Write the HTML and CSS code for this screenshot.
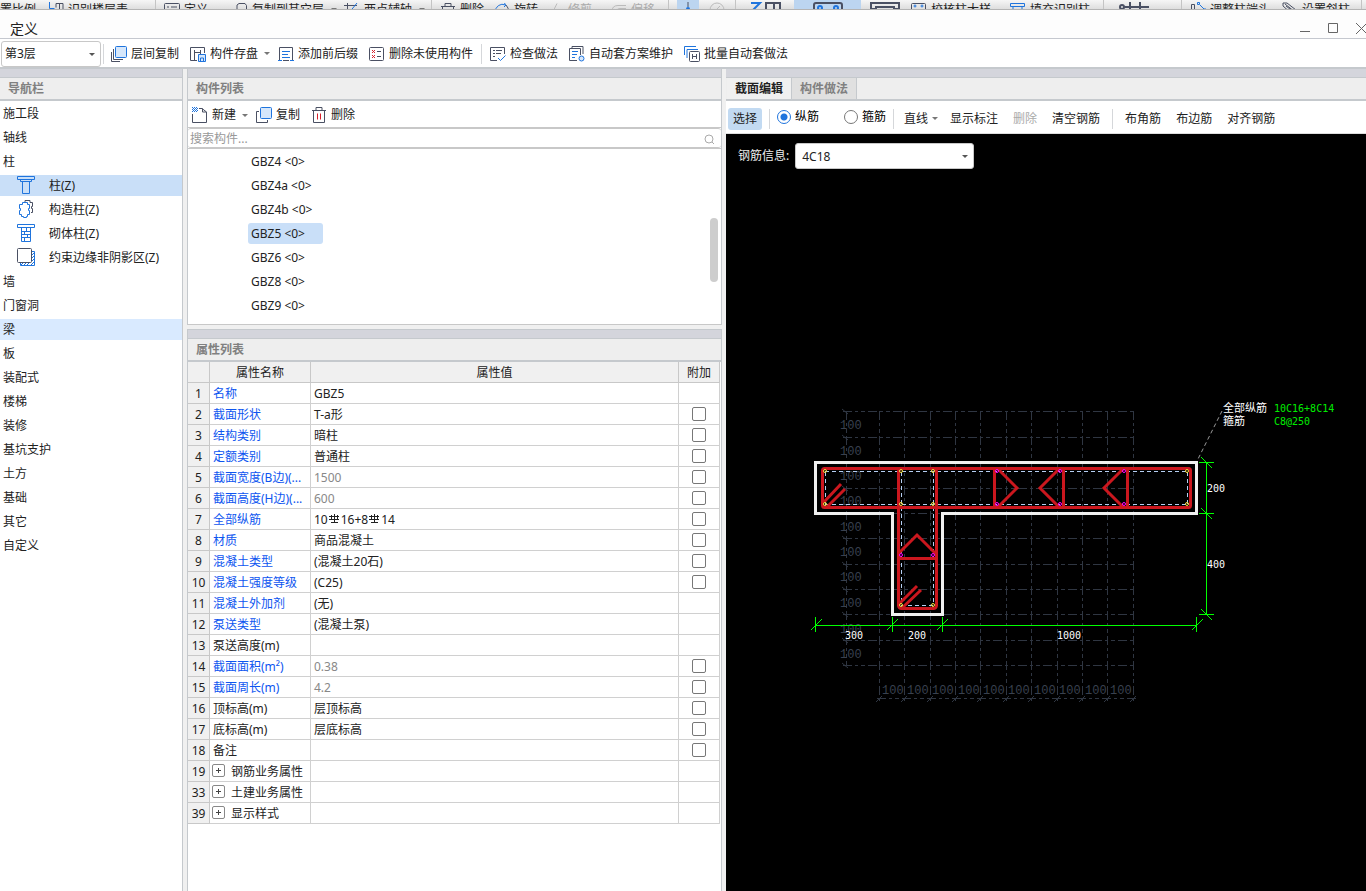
FILE: index.html
```html
<!DOCTYPE html>
<html lang="zh-CN">
<head>
    <meta charset="UTF-8">
    <meta name="viewport" content="width=device-width, initial-scale=1.0">
    <title>定义</title>
    <link rel="stylesheet" href="styles.css">
</head>
<body>

    <!-- Ribbon of the main window, mostly hidden behind the dialog -->
    <div class="ribbon">
        <div class="tool">置比例</div>
        <div class="tool"><svg class="icon" viewBox="0 0 16 16"><path class="b" d="M1.500 0v6.500h5"/><path d="M6.500 15V9.500H15V1.500H8v4M11.500 1.500v8"/></svg>识别楼层表</div>
        <div class="tool line"><svg class="icon" viewBox="0 0 16 16"><rect x=".5" y="1.500" width="15" height="13" rx="1"/><path d="M3 5h2M7 5h6M3 8h2M7 8h6"/></svg>定义</div>
        <div class="tool"><svg class="icon" viewBox="0 0 16 16"><path class="b" d="M0 7.500h5v6H.5z"/><path d="M5 10V3l2-1.500h6l1.500 2V12H8"/></svg>复制到其它层<i class="caret"></i></div>
        <div class="tool"><svg class="icon" viewBox="0 0 16 16"><path d="M0 3.500h13M3.500 1v13"/><path class="b" d="M13 1 4 12"/></svg>两点辅轴<i class="caret"></i></div>
        <div class="tool line"><svg class="icon" viewBox="0 0 16 16"><path d="M1 4.500h14M5 4V1.500h6V4M2.500 5v10h11V5"/><path class="r" d="M6.500 7v6M9.500 7v6"/></svg>删除</div>
        <div class="tool"><svg class="icon" viewBox="0 0 16 16"><path class="b" d="M1.500 10a7 7 0 0 1 10-7l-1-2M12 3l-2 2"/><path d="M12 3a7 7 0 0 1 2 7"/></svg>旋转</div>
        <div class="tool off"><svg class="icon" viewBox="0 0 16 16"><path d="M0 7.500h6l3-6M9 7.500h6"/></svg>修剪</div>
        <div class="tool off"><svg class="icon" viewBox="0 0 16 16"><path d="M15 3.500H7q-6 0-6 6M15 6.500H9q-4 0-4 5"/></svg>偏移</div>
        <div class="tool line"><span class="lit"><svg class="icon" viewBox="0 0 16 16"><path d="M8 0v5M0 7.500h5M11 7.500h5"/><circle class="bf" cx="8" cy="7" r="2"/></svg></span></div>
        <div class="tool off"><svg class="icon" viewBox="0 0 16 16"><circle cx="8" cy="8" r="7"/><path d="m6 9 5-5"/></svg></div>
        <div class="tool line big"><svg class="wide" viewBox="0 0 30 16"><path class="b" d="M0 1h9L2 8"/><path d="M15 16V1h8v6M23 1h6v15"/></svg></div>
        <div class="tool active"><svg class="wide" viewBox="0 0 30 16"><rect x="1" y="1" width="28" height="17" rx="2"/><circle class="b" cx="7" cy="6" r="2"/><circle class="b" cx="23" cy="6" r="2"/></svg></div>
        <div class="tool big"><svg class="wide" viewBox="0 0 30 16"><path d="M1 1h28v6h-5V5H6v2H1z"/></svg></div>
        <div class="tool"><svg class="icon" viewBox="0 0 16 16"><rect x=".5" y="1.500" width="14" height="13" rx="1"/><circle class="b" cx="4" cy="4" r="1"/><circle class="b" cx="11" cy="4" r="1"/></svg>校核柱大样</div>
        <div class="tool"><svg class="icon" viewBox="0 0 16 16"><path class="b" d="M.5 1.500h14v3H.5zM3 4.500v3h9v-3"/></svg>填充识别柱</div>
        <div class="tool line big"><svg class="wide" viewBox="0 0 30 16"><circle cx="3" cy="5" r="2"/><path d="M5 5h25M11 0v8M21 0v8"/></svg></div>
        <div class="tool line"><svg class="icon" viewBox="0 0 16 16"><path d="M1.500 15V2.500h3V15"/><path class="b" d="M7.500.500h2v2h-2zM10 3l4 4h3"/></svg>调整柱端头</div>
        <div class="tool"><svg class="icon" viewBox="0 0 16 16"><path d="M1 1h4l9 7M1 1v3l9 8M4 4l9 7M3 2l10 8"/></svg>设置斜柱</div>
        <div class="tool line"></div>
    </div>

    <!-- Title Bar -->
    <header class="titlebar">
        <h1>定义</h1>
        <div class="window-buttons">
            <button aria-label="最小化"><svg viewBox="0 0 11 11"><path d="M0 8.500h10"/></svg></button>
            <button aria-label="最大化"><svg viewBox="0 0 11 11"><path d="M.5.500h9v9h-9z"/></svg></button>
            <button aria-label="关闭"><svg viewBox="0 0 11 11"><path d="m0 0 11 11M11 0 0 11"/></svg></button>
        </div>
    </header>

    <!-- Main Toolbar -->
    <div class="toolbar main-toolbar">
        <div class="select floor"><select aria-label="楼层"><option>第3层</option></select></div>
        <i class="sep first"></i>
        <button><svg class="icon" viewBox="0 0 16 16"><rect class="b fill" x="4.500" y=".5" width="11" height="11" rx="1"/><path d="M2.500 3v10.500H12M.5 6v9.500H9"/></svg>层间复制</button>
        <button><svg class="icon" viewBox="0 0 16 16"><path d="M7 14.500H.5v-13h14V7M4.500 4v10M4.500 6.500h6V4M10.500 6v3"/><path class="b fill" d="M8.500 8.500h7v7h-7z"/><path class="b" d="M10.500 15v-3h3v3"/></svg>构件存盘<i class="caret"></i></button>
        <button><svg class="icon" viewBox="0 0 16 16"><path d="M3 14.500H1.500v-13h13v13H13M5 14.500h6"/><path class="b" d="M4 5.500h8M4 8.500h6M4 11.500h8M0 14.500h4M12 14.500h4"/></svg>添加前后缀</button>
        <button><svg class="icon" viewBox="0 0 16 16"><rect x=".5" y="1.500" width="14" height="13" rx="1"/><path class="r" d="m3 4 3 3M6 4 3 7M3 9l3 3M6 9l-3 3"/><path d="M8 5.500h4M8 10.500h4"/></svg>删除未使用构件</button>
        <i class="sep"></i>
        <button><svg class="icon" viewBox="0 0 16 16"><path d="M7 14.500H.5v-13h14V8M3 4.500h2M6 4.500h6M3 7.500h2M6 7.500h5M3 10.500h2"/><path class="b" d="m8 12 2.500 2.500 5-5"/></svg>检查做法</button>
        <button><svg class="icon" viewBox="0 0 16 16"><path d="M3 2V.5h11V8M8 14.500H.5v-12h11V9"/><path class="b" d="M3 5.500h6M3 8.500h5M3 11.500h3"/><circle class="b fill" cx="12.500" cy="12.500" r="2.500"/></svg>自动套方案维护</button>
        <button><svg class="icon" viewBox="0 0 16 16"><path class="b" d="M.5 9V.5H12M3 12V3.500h11"/><rect x="5.500" y="5.500" width="10" height="10" rx="1"/><path d="M8.500 8v5M12.500 8v5M8.500 10.500h4"/></svg>批量自动套做法</button>
    </div>

    <main class="workspace">

        <!-- Navigation -->
        <nav class="panel nav">
            <div class="strip"></div>
            <h2>导航栏</h2>
            <ul>
                <li>施工段</li>
                <li>轴线</li>
                <li>柱</li>
                <li class="child selected"><svg viewBox="0 0 20 20"><path d="M1.500 1.500h17v3h-17zM4.500 4.500v2h11v-2M6.500 6.500v12h7v-12"/></svg>柱(Z)</li>
                <li class="child"><svg viewBox="0 0 20 20"><path d="M6.500 3.500h5v2h2v4h-1v2h1v4h-2v2h-1v1h-3v-1h-2v-2h-2v-4h1v-2h-1v-4h3z"/><path class="back" d="M9 3V1.500h5v2h2.500v4h-1v2h1v4H15"/></svg>构造柱(Z)</li>
                <li class="child"><svg viewBox="0 0 20 20"><path d="M1.500 1.500h17v3h-17zM5.500 4.500v14h9v-14M5 8.500h9M5 11.500h9M5 14.500h9M10.500 5v3M8.500 9v3M11.500 12v3M8.500 15v3"/></svg>砌体柱(Z)</li>
                <li class="child"><svg viewBox="0 0 20 20"><path d="M16 4.500h2.500v14h-14V16M16 8l2-2M16 11l2-2M16 14l2-2M15 18l3-3M11 18l2-2M8 18l2-2M5 18l2-2"/><rect class="front" x="1.500" y="1.500" width="14" height="14" rx="1"/></svg>约束边缘非阴影区(Z)</li>
                <li>墙</li>
                <li>门窗洞</li>
                <li class="hover">梁</li>
                <li>板</li>
                <li>装配式</li>
                <li>楼梯</li>
                <li>装修</li>
                <li>基坑支护</li>
                <li>土方</li>
                <li>基础</li>
                <li>其它</li>
                <li>自定义</li>
            </ul>
        </nav>

        <div class="middle">
            <!-- Component List -->
            <section class="panel components">
                <div class="strip"></div>
                <h2>构件列表</h2>
                <div class="toolbar">
                    <button><svg class="icon" viewBox="0 0 16 16"><path d="M.5 7v8.500h14V5L10 1.500H7M10.500 1.500V5h4"/><path class="b dots" d="M0 .5h5M1 1.500h5M0 2.500h5M1 3.500h5M0 4.500h5"/></svg>新建<i class="caret"></i></button>
                    <button><svg class="icon" viewBox="0 0 16 16"><path d="M3 4.500H.5v11h11V13"/><rect class="b fill" x="4.500" y=".5" width="11" height="11" rx="1"/></svg>复制</button>
                    <button><svg class="icon" viewBox="0 0 16 16"><path d="M1 3.500h14M5 3V.5h6V3M2.500 4v11.500h11V4"/><path class="r" d="M6.500 6.500v6M9.500 6.500v6"/></svg>删除</button>
                </div>
                <div class="search">
                    <input type="text" placeholder="搜索构件..." aria-label="搜索构件">
                    <svg viewBox="0 0 12 12"><circle cx="6" cy="6" r="4"/><path d="m9 9 2 2"/></svg>
                </div>
                <div class="list">
                    <ul>
                        <li>GBZ4 &lt;0&gt;</li>
                        <li>GBZ4a &lt;0&gt;</li>
                        <li>GBZ4b &lt;0&gt;</li>
                        <li class="selected">GBZ5 &lt;0&gt;</li>
                        <li>GBZ6 &lt;0&gt;</li>
                        <li>GBZ8 &lt;0&gt;</li>
                        <li>GBZ9 &lt;0&gt;</li>
                    </ul>
                    <div class="thumb"></div>
                </div>
            </section>

            <!-- Property List -->
            <section class="panel properties">
                <div class="strip"></div>
                <h2>属性列表</h2>
                <table>
                    <thead>
                        <tr><th class="num"></th><th class="name">属性名称</th><th>属性值</th><th class="add">附加</th></tr>
                    </thead>
                    <tbody>
                        <tr><th>1</th><td class="key">名称</td><td>GBZ5</td><td></td></tr>
                        <tr><th>2</th><td class="key">截面形状</td><td>T-a形</td><td><input type="checkbox" aria-label="附加 截面形状"></td></tr>
                        <tr><th>3</th><td class="key">结构类别</td><td>暗柱</td><td><input type="checkbox" aria-label="附加 结构类别"></td></tr>
                        <tr><th>4</th><td class="key">定额类别</td><td>普通柱</td><td><input type="checkbox" aria-label="附加 定额类别"></td></tr>
                        <tr><th>5</th><td class="key">截面宽度(B边)(...</td><td class="calc">1500</td><td><input type="checkbox" aria-label="附加 截面宽度"></td></tr>
                        <tr><th>6</th><td class="key">截面高度(H边)(...</td><td class="calc">600</td><td><input type="checkbox" aria-label="附加 截面高度"></td></tr>
                        <tr><th>7</th><td class="key">全部纵筋</td><td>10<svg class="rebar" viewBox="0 0 11 10"><path d="M0 2.500h10M0 5.500h10M2.500 1v5M5.500 0v9M8.500 1v5M2 8.500h7"/></svg>16+8<svg class="rebar" viewBox="0 0 11 10"><path d="M0 2.500h10M0 5.500h10M2.500 1v5M5.500 0v9M8.500 1v5M2 8.500h7"/></svg>14</td><td><input type="checkbox" aria-label="附加 全部纵筋"></td></tr>
                        <tr><th>8</th><td class="key">材质</td><td>商品混凝土</td><td><input type="checkbox" aria-label="附加 材质"></td></tr>
                        <tr><th>9</th><td class="key">混凝土类型</td><td>(混凝土20石)</td><td><input type="checkbox" aria-label="附加 混凝土类型"></td></tr>
                        <tr><th>10</th><td class="key">混凝土强度等级</td><td>(C25)</td><td><input type="checkbox" aria-label="附加 混凝土强度等级"></td></tr>
                        <tr><th>11</th><td class="key">混凝土外加剂</td><td>(无)</td><td></td></tr>
                        <tr><th>12</th><td class="key">泵送类型</td><td>(混凝土泵)</td><td></td></tr>
                        <tr><th>13</th><td>泵送高度(m)</td><td></td><td></td></tr>
                        <tr><th>14</th><td class="key">截面面积(m²)</td><td class="calc">0.38</td><td><input type="checkbox" aria-label="附加 截面面积"></td></tr>
                        <tr><th>15</th><td class="key">截面周长(m)</td><td class="calc">4.2</td><td><input type="checkbox" aria-label="附加 截面周长"></td></tr>
                        <tr><th>16</th><td>顶标高(m)</td><td>层顶标高</td><td><input type="checkbox" aria-label="附加 顶标高"></td></tr>
                        <tr><th>17</th><td>底标高(m)</td><td>层底标高</td><td><input type="checkbox" aria-label="附加 底标高"></td></tr>
                        <tr><th>18</th><td>备注</td><td></td><td><input type="checkbox" aria-label="附加 备注"></td></tr>
                        <tr><th>19</th><td><button class="expand" aria-label="展开"></button>钢筋业务属性</td><td></td><td></td></tr>
                        <tr><th>33</th><td><button class="expand" aria-label="展开"></button>土建业务属性</td><td></td><td></td></tr>
                        <tr><th>39</th><td><button class="expand" aria-label="展开"></button>显示样式</td><td></td><td></td></tr>
                    </tbody>
                </table>
            </section>
        </div>

        <!-- Section Editor -->
        <section class="editor">
            <div class="strip"></div>
            <div class="tabs">
                <button class="current">截面编辑</button>
                <button>构件做法</button>
            </div>
            <div class="edit-tools">
                <button class="pick">选择</button>
                <i class="sep"></i>
                <label><input type="radio" name="bar" checked>纵筋</label>
                <label class="hoop"><input type="radio" name="bar">箍筋</label>
                <i class="sep"></i>
                <button class="shape">直线<i class="caret"></i></button>
                <button>显示标注</button>
                <button disabled>删除</button>
                <button>清空钢筋</button>
                <i class="sep wide-sep"></i>
                <button>布角筋</button>
                <button>布边筋</button>
                <button>对齐钢筋</button>
            </div>
            <div class="canvas">
                <div class="bar-info">
                    <label for="bar-info">钢筋信息:</label>
                    <div class="select"><select id="bar-info"><option>4C18</option></select></div>
                </div>
                <svg class="drawing" viewBox="726 134 640 757">
                    <!-- 100mm grid -->
                    <g class="grid">
                        <path d="M843 411.500h290M843 437.500h290M843 462.500h290M843 488.500h290M843 513.500h290M843 538.500h290M843 564.500h290M843 589.500h290M843 614.500h290M843 640.500h290M843 665.500h290M877 698.500h259"/>
                        <path d="M846.500 411v255M879.500 411v291M904.500 411v291M930.500 411v291M955.500 411v291M980.500 411v291M1006.500 411v291M1031.500 411v291M1057.500 411v291M1082.500 411v291M1107.500 411v291M1133.500 411v291"/>
                        <path class="ticks" d="m842 409 6 5M842 435l6 5M842 486l6 5M842 536l6 5M842 562l6 5M842 587l6 5M842 612l6 5M842 638l6 5M842 663l6 5M876 702l6-6M901 702l6-6M927 702l6-6M952 702l6-6M977 702l6-6M1003 702l6-6M1028 702l6-6M1054 702l6-6M1079 702l6-6M1104 702l6-6M1130 702l6-6"/>
                    </g>
                    <g class="grid-text">
                        <text x="840" y="429">100</text>
                        <text x="840" y="455">100</text>
                        <text x="840" y="480">100</text>
                        <text x="840" y="505">100</text>
                        <text x="840" y="531">100</text>
                        <text x="840" y="556">100</text>
                        <text x="840" y="581">100</text>
                        <text x="840" y="607">100</text>
                        <text x="840" y="633">100</text>
                        <text x="840" y="658">100</text>
                        <text x="882" y="694">100</text>
                        <text x="907" y="694">100</text>
                        <text x="932" y="694">100</text>
                        <text x="958" y="694">100</text>
                        <text x="983" y="694">100</text>
                        <text x="1008" y="694">100</text>
                        <text x="1034" y="694">100</text>
                        <text x="1059" y="694">100</text>
                        <text x="1085" y="694">100</text>
                        <text x="1110" y="694">100</text>
                    </g>

                    <!-- Concrete outline -->
                    <path class="outline" d="M815.500 462.500h381v51h-254v101h-50v-101h-77z"/>

                    <!-- Cover lines -->
                    <path class="cover" d="M825 471.500h362M825 504.500h362M825.500 472v33M1187.500 472v33M901.500 472v133M933.500 472v133M901 605.500h33"/>

                    <!-- Stirrups and ties -->
                    <g class="stirrup">
                        <rect x="822.500" y="468.500" width="368" height="39" rx="2"/>
                        <rect x="898.500" y="468.500" width="38" height="140" rx="3"/>
                        <path d="m824 502 17-18M827 507l18-18M898 605l19-19M902 608l19-18"/>
                        <path d="m898 554 19-19 19 19M898 558.500h38"/>
                        <path d="M994.500 468v39M997 468l20 20-19 19"/>
                        <path d="M1063.500 468v39M1060 468l-20 20 19 19"/>
                        <path d="M1127.500 468v39M1124 468l-20 20 19 19"/>
                    </g>
                    <g class="corner-bar">
                        <circle cx="825" cy="471" r="1.500"/><circle cx="825" cy="504" r="1.500"/>
                        <circle cx="901" cy="471" r="1.500"/><circle cx="933" cy="471" r="1.500"/>
                        <circle cx="901" cy="504" r="1.500"/><circle cx="933" cy="504" r="1.500"/>
                        <circle cx="1187" cy="471" r="1.500"/><circle cx="1187" cy="504" r="1.500"/>
                        <circle cx="901" cy="605" r="1.500"/><circle cx="933" cy="605" r="1.500"/>
                    </g>
                    <g class="side-bar">
                        <circle cx="997" cy="471" r="1.500"/><circle cx="997" cy="504" r="1.500"/>
                        <circle cx="1060" cy="471" r="1.500"/><circle cx="1060" cy="504" r="1.500"/>
                        <circle cx="1124" cy="471" r="1.500"/><circle cx="1124" cy="504" r="1.500"/>
                        <circle cx="901" cy="555" r="1.500"/><circle cx="933" cy="555" r="1.500"/>
                    </g>

                    <!-- Dimensions -->
                    <path class="dim" d="M815 625.500h382M815.500 617v15M892.500 617v15M942.500 617v15M1196.500 617v15M1206.500 462v153M1199 462.500h15M1199 513.500h15M1199 614.500h15"/>
                    <path class="dim" d="m811 630 11-11M887 630l11-11M937 630l11-11M1192 630l11-11M1201 457l11 11M1201 508l11 11M1201 609l11 11"/>
                    <g class="dim-text">
                        <text x="845" y="639">300</text>
                        <text x="908" y="639">200</text>
                        <text x="1057" y="639">1000</text>
                        <text x="1207" y="492">200</text>
                        <text x="1207" y="568">400</text>
                        <text class="cn" x="1223" y="412">全部纵筋</text>
                        <text class="cn" x="1223" y="425">箍筋</text>
                        <text class="spec" x="1274" y="412">10C16+8C14</text>
                        <text class="spec" x="1274" y="425">C8@250</text>
                    </g>
                    <path class="leader" d="m1222 411-25 50"/>
                </svg>
            </div>
        </section>
    </main>

</body>
</html>
```
FILE: styles.css
```css
* {
    box-sizing: border-box;
}
body {
    margin: 0;
    height: 100vh;
    display: flex;
    flex-direction: column;
    overflow: hidden;
    background: #f0f0f0;
    color: #222;
    font-family: "Noto Sans", "Noto Sans CJK SC", sans-serif;
    font-size: 12px;
    line-height: 22px;
}
h1, h2, ul {
    margin: 0;
    padding: 0;
    font-size: 12px;
    list-style: none;
}
button, select, input {
    font: inherit;
    color: inherit;
    margin: 0;
}
button {
    display: flex;
    align-items: center;
    padding: 0;
    border: 0;
    background: none;
    white-space: nowrap;
}
svg {
    display: block;
    fill: none;
    stroke: #4a5063;
}
.icon {
    width: 16px;
    height: 16px;
    margin-right: 4px;
    flex: none;
}
.b {
    stroke: #1f74dd;
}
.r {
    stroke: #d8202b;
}
.bf {
    fill: #1f74dd;
    stroke: none;
}
.fill {
    fill: #d6e7fb;
}
.dots {
    stroke-dasharray: 1 1;
}
.caret {
    width: 6px;
    border: 3px solid transparent;
    border-top-color: #777;
    border-bottom: 0;
}
.sep {
    width: 1px;
    height: 20px;
    background: #d5d7da;
}

/* ribbon */
.ribbon {
    flex: none;
    height: 10px;
    overflow: hidden;
    display: grid;
    grid-template-columns: 48px 107px 77px 112px 87px 63px 54px 63px 57px 41px 26px 59px 67px 50px 99px 93px 78px 101px 79px 1fr;
    background: linear-gradient(#f6f6f6, #dedede);
    border-bottom: 1px solid #b4b4b4;
}
.tool {
    display: flex;
    align-items: center;
    height: 19px;
    white-space: nowrap;
}
.tool.line {
    border-left: 1px solid #c4c4c4;
    padding-left: 8px;
}
.tool .caret {
    margin-left: 7px;
}
.tool.off {
    color: #aaa;
}
.tool.off svg {
    stroke: #bbb;
}
.tool.active {
    background: #bcd5f0;
    justify-content: center;
}
.tool.big {
    padding-left: 15px;
}
.tool:not(.line).big {
    padding-left: 9px;
}
.wide {
    width: 30px;
    height: 16px;
    stroke-width: 2;
}
.lit {
    flex: none;
    padding: 2px 3px;
    background: #bcd5f0;
}
.lit .icon {
    margin: 0;
}

/* title bar */
.titlebar {
    flex: none;
    display: flex;
    justify-content: space-between;
    height: 29px;
    padding: 8px 0 0 10px;
    background: #fdfdfd;
    border-bottom: 1px solid #c5c8cf;
}
.titlebar h1 {
    font-size: 14px;
    font-weight: normal;
}
.window-buttons {
    display: flex;
    gap: 17px;
    height: 20px;
    margin-right: -1px;
}
.window-buttons svg {
    width: 11px;
    height: 11px;
    stroke: #666;
}

/* toolbars */
.toolbar {
    display: flex;
    align-items: center;
    gap: 11px;
    background: #fff;
}
.toolbar .caret {
    margin-left: 6px;
    margin-right: -3px;
}
.main-toolbar {
    flex: none;
    height: 30px;
    padding: 1px 0 0 1px;
    border-bottom: 2px solid #c5c9cd;
}
.main-toolbar .sep {
    margin: 0 -3px;
}
.main-toolbar .sep.first {
    margin: 0 -4px 0 -9px;
}
.select {
    position: relative;
}
.select::after {
    content: "";
    position: absolute;
    right: 6px;
    top: 12px;
    border: 3px solid transparent;
    border-top-color: #555;
    border-bottom: 0;
    pointer-events: none;
}
.select select {
    appearance: none;
    display: block;
    width: 100%;
    height: 26px;
    padding: 1px 16px 0 6px;
    border: 1px solid #c8c8c8;
    border-radius: 3px;
    background: #fff;
}
.floor {
    width: 100px;
}
.floor select {
    padding-left: 3px;
}

/* panels */
.workspace {
    flex: 1;
    min-height: 0;
    display: grid;
    grid-template-columns: 183px 535px 1fr;
    column-gap: 4px;
}
.panel {
    background: #fff;
    border-right: 1px solid #c5c9cd;
}
.strip {
    height: 9px;
    background: #d4d5dc;
    border-bottom: 1px solid #c5c9cd;
}
.panel h2 {
    height: 23px;
    padding-left: 8px;
    background: #eee;
    border-bottom: 2px solid #c5c9cd;
    color: #808080;
}
.nav ul {
    display: flex;
    flex-direction: column;
    gap: 3px;
    padding-top: 2px;
}
.nav li {
    height: 21px;
    padding-left: 3px;
}
.nav .child {
    display: flex;
    padding-left: 16px;
}
.nav .child svg {
    width: 20px;
    height: 20px;
    margin-right: 13px;
    stroke: #1f74dd;
}
.nav .back, .nav .front {
    stroke: #4a5063;
}
.nav .front {
    fill: #fff;
}
.selected {
    background: #c9dff8;
}
.hover {
    background: #d9eaff;
}

/* component list */
.middle {
    display: flex;
    flex-direction: column;
    gap: 4px;
    min-height: 0;
}
.middle .panel {
    border-left: 1px solid #c5c9cd;
}
.components .toolbar {
    height: 27px;
    padding: 2px 0 0 4px;
    border-bottom: 1px solid #c8c8c8;
}
.search {
    display: flex;
    align-items: center;
    height: 20px;
    padding: 1px 6px 0 2px;
    border: solid #c8c8c8;
    border-width: 1px 0;
    border-radius: 3px;
}
.search input {
    flex: 1;
    height: 18px;
    padding: 0;
    border: 0;
    outline: 0;
    background: none;
}
.search input::placeholder {
    color: #999;
}
.search svg {
    width: 12px;
    height: 12px;
    stroke: #aaa;
}
.list {
    position: relative;
    height: 177px;
    padding: 2px 0 0 60px;
    border: solid #c8c8c8;
    border-width: 1px 0;
}
.list ul {
    display: flex;
    flex-direction: column;
    align-items: flex-start;
    gap: 3px;
}
.list li {
    min-width: 75px;
    height: 21px;
    padding: 0 3px;
    border-radius: 3px;
}
.thumb {
    position: absolute;
    right: 3px;
    top: 69px;
    width: 8px;
    height: 64px;
    border-radius: 4px;
    background: #cdcdcd;
}

/* property table */
.properties {
    flex: 1;
    border-top: 1px solid #c5c9cd;
}
table {
    width: calc(100% - 1px);
    table-layout: fixed;
    border-spacing: 0;
}
th, td {
    height: 21px;
    padding: 2px 3px 0;
    border: solid #d0d0d0;
    border-width: 0 1px 1px 0;
    font-weight: normal;
    line-height: 18px;
    text-align: left;
    white-space: nowrap;
    overflow: hidden;
}
th {
    padding: 2px 0 0;
    text-align: center;
    background: #f0f0f0;
    border-color: #c8c8c8;
}
.num {
    width: 22px;
}
.name {
    width: 101px;
}
.add {
    width: 41px;
}
td:last-child {
    padding: 0;
}
.key {
    color: #0d55f0;
}
.calc {
    color: #888;
}
input[type="checkbox"] {
    appearance: none;
    display: block;
    width: 14px;
    height: 14px;
    margin: 0 auto;
    border: 1px solid #777;
    border-radius: 2px;
    background: #fff;
}
.rebar {
    display: inline-block;
    width: 11px;
    height: 10px;
    margin: 0 1px;
    stroke: #222;
}
.expand {
    display: inline-block;
    position: relative;
    width: 13px;
    height: 13px;
    margin: 0 6px 0 -1px;
    border: 1px solid #888;
    border-radius: 2px;
}
.expand::before, .expand::after {
    content: "";
    position: absolute;
    left: 3px;
    top: 5px;
    width: 5px;
    height: 1px;
    background: #444;
}
.expand::after {
    transform: rotate(90deg);
}

/* section editor */
.editor {
    display: flex;
    flex-direction: column;
    min-height: 0;
}
.tabs {
    display: flex;
    height: 23px;
    padding-left: 1px;
    background: #eee;
    border-bottom: 2px solid #c5c9cd;
}
.tabs button {
    padding: 0 8px;
    border-right: 1px solid #c5c9cd;
    background: #e0e0e0;
    color: #808080;
    font-weight: bold;
}
.tabs .current {
    background: #f0f0f0;
    color: #222;
}
.edit-tools {
    display: flex;
    align-items: center;
    gap: 15px;
    height: 33px;
    padding: 3px 0 0 2px;
    background: #fff;
    border-bottom: 1px solid #ddd;
    white-space: nowrap;
}
.edit-tools .pick {
    height: 22px;
    padding: 0 5px;
    border-radius: 3px;
    background: #c2daf2;
}
.edit-tools .sep {
    margin: 0 -8px;
}
.edit-tools .wide-sep {
    margin: 0 -3px;
}
.edit-tools label {
    display: flex;
    align-items: center;
    gap: 4px;
    padding-bottom: 3px;
    color: #000;
}
.edit-tools .hoop {
    margin-left: 10px;
}
.edit-tools .shape {
    margin-left: 3px;
}
.edit-tools button:disabled {
    color: #aaa;
}
.shape .caret {
    margin-left: 4px;
    margin-right: -3px;
}
input[type="radio"] {
    appearance: none;
    width: 14px;
    height: 14px;
    border: 1px solid #777;
    border-radius: 50%;
    background: #fff;
}
input[type="radio"]:checked {
    border-color: #1f74dd;
    background: radial-gradient(#1f74dd 3px, #fff 4px);
}
.canvas {
    position: relative;
    flex: 1;
    min-height: 0;
    background: #000;
}
.bar-info {
    position: absolute;
    left: 12px;
    top: 9px;
    display: flex;
    align-items: center;
    gap: 6px;
    color: #eee;
}
.bar-info .select {
    width: 179px;
    color: #222;
}

/* drawing */
.drawing {
    width: 100%;
    height: 100%;
}
.grid {
    stroke: #2f3642;
    stroke-dasharray: 9 3 3 3 4 3;
}
.ticks {
    stroke-dasharray: none;
}
.drawing text {
    stroke: none;
    font-family: "DejaVu Sans Mono", "Noto Sans CJK SC", monospace;
    font-size: 10px;
}
.drawing .grid-text text {
    fill: #39414f;
    font-family: "Liberation Mono", monospace;
    font-size: 12px;
}
.outline {
    stroke: #f0f0f0;
    stroke-width: 3;
}
.cover {
    stroke: #b5cff2;
    stroke-dasharray: 4 3;
}
.stirrup {
    stroke: #cb171e;
    stroke-width: 3;
}
.corner-bar {
    stroke: #f2dc3c;
}
.side-bar {
    stroke: #f0f;
}
.dim {
    stroke: #0f0;
}
.dim-text {
    fill: #fff;
}
.drawing .cn {
    font-size: 11px;
}
.drawing .spec {
    fill: #0e0;
}
.leader {
    stroke: #999;
    stroke-dasharray: 4 3;
}
```
